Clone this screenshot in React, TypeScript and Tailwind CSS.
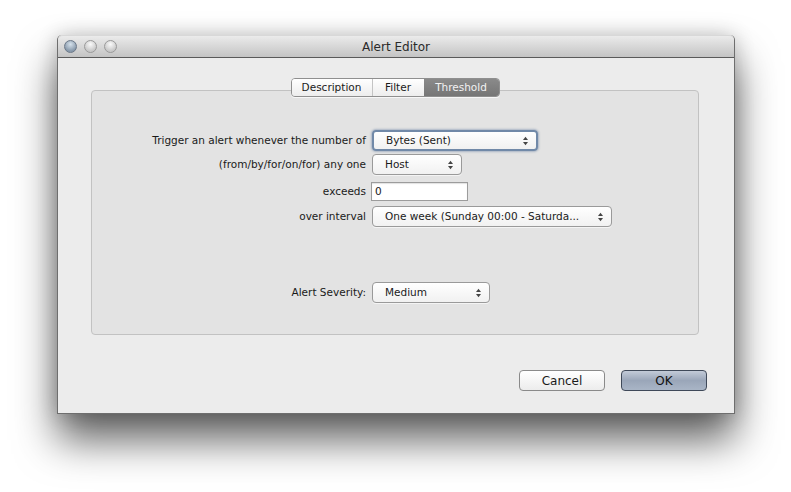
import React from "react";

const font = { fontFamily: '"DejaVu Sans", "Liberation Sans", sans-serif' };

function UpDown() {
  return (
    <svg width="7" height="10" viewBox="0 0 7 10" className="shrink-0">
      <path d="M3.5 0.8 L6 4 L1 4 Z" fill="#444" />
      <path d="M3.5 9.2 L6 6 L1 6 Z" fill="#444" />
    </svg>
  );
}

function Select({
  value,
  width,
  focused,
}: {
  value: string;
  width: string;
  focused?: boolean;
}) {
  return (
    <div
      className={`${width} h-[21px] flex items-center justify-between pl-[12px] pr-[7px] rounded-[4px] bg-gradient-to-b from-[#ffffff] to-[#f1f1f1] text-[10.5px] text-[#1a1a1a] ${
        focused
          ? "border-2 border-[#7189a8] shadow-[0_0_2px_1px_rgba(100,125,160,0.45)]"
          : "border border-[#9a9a9a] shadow-[0_1px_0_rgba(255,255,255,0.6)]"
      }`}
    >
      <span className="truncate">{value}</span>
      <UpDown />
    </div>
  );
}

function Row({ label, children, className = "" }: { label: string; children: React.ReactNode; className?: string }) {
  return (
    <div className={`flex items-center ${className}`}>
      <div className="w-[280px] pr-[6px] text-right text-[10.5px] text-[#1a1a1a] whitespace-nowrap">{label}</div>
      {children}
    </div>
  );
}

export default function App() {
  return (
    <div className="w-[791px] h-[492px] bg-white pt-[35px] pl-[57px] overflow-hidden" style={font}>
      {/* Window */}
      <div className="w-[678px] h-[379px] flex flex-col rounded-t-[5px] bg-[#ececec] border-x border-b border-[#6e6e6e] shadow-[0_26px_42px_rgba(0,0,0,0.62),0_0_20px_rgba(0,0,0,0.2)]">
        {/* Title bar */}
        <div className="relative h-[23px] shrink-0 flex items-center rounded-t-[5px] bg-gradient-to-b from-[#ebebeb] to-[#c4c4c4] border-b border-[#5a5a5a] border-t border-t-[#d8d8d8]">
          <div className="flex items-center gap-[7px] pl-[6px]">
            <span className="w-[13px] h-[13px] rounded-full border border-[#6b7888] bg-[radial-gradient(circle_at_50%_30%,#d6e2ec,#8899ab_70%)]" />
            <span className="w-[13px] h-[13px] rounded-full border border-[#9a9a9a] bg-[radial-gradient(circle_at_50%_30%,#fafafa,#c8c8c8_70%)]" />
            <span className="w-[13px] h-[13px] rounded-full border border-[#9a9a9a] bg-[radial-gradient(circle_at_50%_30%,#fafafa,#c8c8c8_70%)]" />
          </div>
          <div className="absolute inset-0 flex items-center justify-center text-[12px] text-[#2a2a2a] pointer-events-none">
            Alert Editor
          </div>
        </div>

        {/* Body */}
        <div className="flex-1 flex flex-col pl-[33px] pr-[35px] pt-[20px]">
          {/* Tabs */}
          <div className="relative z-10 flex justify-center">
            <div className="flex h-[19px] rounded-[4px] border border-[#8f8f8f] overflow-hidden text-[10.5px] shadow-[0_1px_0_rgba(255,255,255,0.7)]">
              <div className="w-[81px] flex items-center justify-center bg-gradient-to-b from-[#ffffff] to-[#ededed] text-[#1a1a1a] border-r border-[#c4c4c4]">
                Description
              </div>
              <div className="w-[51px] flex items-center justify-center bg-gradient-to-b from-[#ffffff] to-[#ededed] text-[#1a1a1a]">
                Filter
              </div>
              <div className="w-[75px] flex items-center justify-center bg-gradient-to-b from-[#8a8a8a] to-[#767676] text-[#f2f2f2]">
                Threshold
              </div>
            </div>
          </div>

          {/* Panel */}
          <div className="-mt-[7px] h-[245px] rounded-[4px] border border-[#c2c2c2] bg-[#e3e3e3] pt-[39px] flex flex-col">
            <Row label="Trigger an alert whenever the number of">
              <Select value="Bytes (Sent)" width="w-[166px]" focused />
            </Row>
            <Row label="(from/by/for/on/for) any one" className="mt-[3px]">
              <Select value="Host" width="w-[90px]" />
            </Row>
            <Row label="exceeds" className="mt-[7px]">
              <div className="w-[97px] h-[19px] -ml-[1px] bg-white border border-[#9c9c9c] shadow-[inset_0_1px_1px_rgba(0,0,0,0.12)] flex items-center pl-[3px] text-[10.5px] text-[#1a1a1a]">
                0
              </div>
            </Row>
            <Row label="over interval" className="mt-[5px]">
              <Select value="One week (Sunday 00:00 - Saturda..." width="w-[240px]" />
            </Row>
            <Row label="Alert Severity:" className="mt-[55px]">
              <Select value="Medium" width="w-[118px]" />
            </Row>
          </div>

          {/* Buttons */}
          <div className="flex justify-end gap-[16px] mt-[35px] -mr-[8px]">
            <div className="w-[86px] h-[21px] rounded-[4px] border border-[#8a8a8a] bg-gradient-to-b from-[#ffffff] to-[#ececec] flex items-center justify-center text-[12px] text-[#1a1a1a]">
              Cancel
            </div>
            <div className="w-[86px] h-[21px] rounded-[4px] border border-[#3f4959] bg-gradient-to-b from-[#c3cbd8] via-[#9aa6b9] to-[#a9b5c6] flex items-center justify-center text-[12px] text-[#111]">
              OK
            </div>
          </div>
        </div>
      </div>
    </div>
  );
}
